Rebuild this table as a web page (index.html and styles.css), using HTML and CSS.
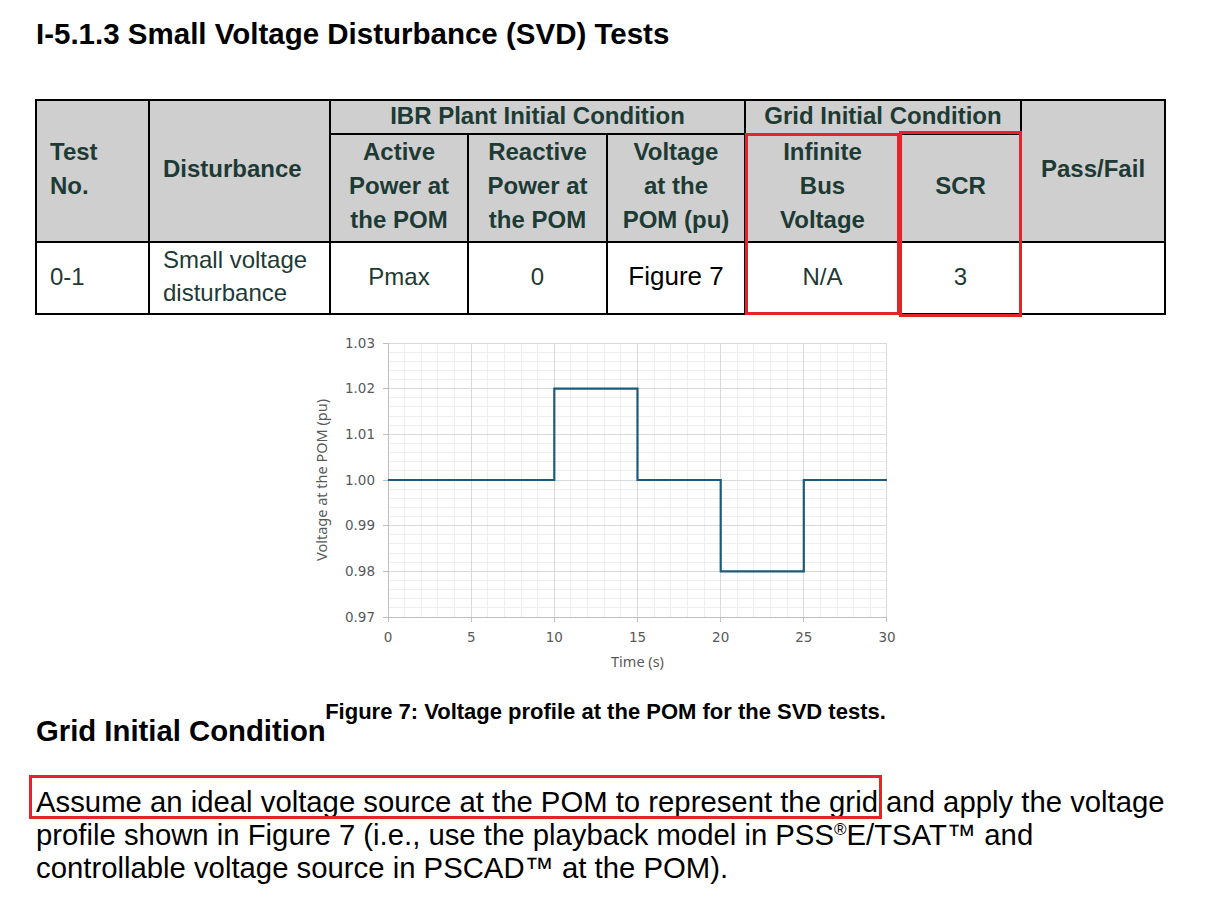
FILE: index.html
```html
<!DOCTYPE html>
<html lang="en">
<head>
<meta charset="utf-8">
<title>I-5.1.3 Small Voltage Disturbance (SVD) Tests</title>
<link rel="stylesheet" href="styles.css">
</head>
<body>
<div class="page">
  <h1 class="title">I-5.1.3 Small Voltage Disturbance (SVD) Tests</h1>

  <div class="table-wrap">
    <table class="tests">
      <colgroup>
        <col class="w113"><col class="w181"><col class="w138"><col class="w139"><col class="w138"><col class="w155"><col class="w121"><col class="w144">
      </colgroup>
      <thead>
        <tr class="hr1">
          <th rowspan="2" class="left">Test<br>No.</th>
          <th rowspan="2" class="left">Disturbance</th>
          <th colspan="3" class="group">IBR Plant Initial Condition</th>
          <th colspan="2" class="group">Grid Initial Condition</th>
          <th rowspan="2">Pass/Fail</th>
        </tr>
        <tr class="hr2">
          <th>Active<br>Power at<br>the POM</th>
          <th>Reactive<br>Power at<br>the POM</th>
          <th>Voltage<br>at the<br>POM (pu)</th>
          <th>Infinite<br>Bus<br>Voltage</th>
          <th>SCR</th>
        </tr>
      </thead>
      <tbody>
        <tr class="br">
          <td class="left">0-1</td>
          <td class="left">Small voltage<br>disturbance</td>
          <td>Pmax</td>
          <td>0</td>
          <td class="fig">Figure 7</td>
          <td>N/A</td>
          <td>3</td>
          <td></td>
        </tr>
      </tbody>
    </table>
    <div class="mark mark-bus"></div>
    <div class="mark mark-scr"></div>
  </div>

  <div class="chart">
    <svg width="600" height="345" viewBox="0 0 600 345" xmlns="http://www.w3.org/2000/svg">
      <path class="grid-minor" d="M104.5 12V286M121.5 12V286M137.5 12V286M154.5 12V286M187.5 12V286M204.5 12V286M221.5 12V286M237.5 12V286M270.5 12V286M287.5 12V286M304.5 12V286M320.5 12V286M354.5 12V286M370.5 12V286M387.5 12V286M404.5 12V286M437.5 12V286M453.5 12V286M470.5 12V286M487.5 12V286M520.5 12V286M537.5 12V286M553.5 12V286M570.5 12V286M88 21.5H587M88 30.5H587M88 39.5H587M88 48.5H587M88 66.5H587M88 75.5H587M88 85.5H587M88 94.5H587M88 112.5H587M88 121.5H587M88 130.5H587M88 139.5H587M88 158.5H587M88 167.5H587M88 176.5H587M88 185.5H587M88 203.5H587M88 212.5H587M88 222.5H587M88 231.5H587M88 249.5H587M88 258.5H587M88 267.5H587M88 276.5H587"/>
      <path class="grid-major" d="M171.5 12V286M254.5 12V286M337.5 12V286M420.5 12V286M503.5 12V286M586.5 12V286M88 12.5H587M88 57.5H587M88 103.5H587M88 149.5H587M88 194.5H587M88 240.5H587"/>
      <path class="axis" d="M88.5 12V291M83 286.5H587M83 12.5H88M83 57.5H88M83 103.5H88M83 149.5H88M83 194.5H88M83 240.5H88M171.5 286V291M254.5 286V291M337.5 286V291M420.5 286V291M503.5 286V291M586.5 286V291"/>
      <path class="series" d="M88 149H254.3V57.7H337.5V149H420.7V240.3H503.8V149H587"/>
      <g class="ylab">
        <text x="75" y="17">1.03</text>
        <text x="75" y="62">1.02</text>
        <text x="75" y="108">1.01</text>
        <text x="75" y="154">1.00</text>
        <text x="75" y="199">0.99</text>
        <text x="75" y="245">0.98</text>
        <text x="75" y="291">0.97</text>
      </g>
      <g class="xlab">
        <text x="88" y="311">0</text>
        <text x="171.2" y="311">5</text>
        <text x="254.3" y="311">10</text>
        <text x="337.5" y="311">15</text>
        <text x="420.7" y="311">20</text>
        <text x="503.8" y="311">25</text>
        <text x="587" y="311">30</text>
      </g>
      <text class="xtitle" x="337.5" y="336">Time (s)</text>
      <text class="ytitle" x="0" y="0" transform="translate(27 149) rotate(-90)">Voltage at the POM (pu)</text>
    </svg>
  </div>

  <p class="caption">Figure 7: Voltage profile at the POM for the SVD tests.</p>

  <h2 class="subhead">Grid Initial Condition</h2>
  <p class="body-text"><span class="hl">Assume an ideal voltage source at the POM to represent the grid</span> and apply the voltage profile shown in Figure 7 (i.e., use the playback model in PSS<sup class="reg">®</sup>E/TSAT™ and controllable voltage source in PSCAD™ at the POM).</p>
</div>
</body>
</html>
```

FILE: styles.css
```css
html, body {
  margin: 0;
  padding: 0;
  background: #ffffff;
}

.page {
  padding: 17px 0 0 36px;
  width: 1160px;
  font-family: "Liberation Sans", Arial, sans-serif;
  color: #000;
}

.title {
  margin: 0;
  font-size: 29.5px;
  line-height: 34px;
  font-weight: bold;
}

.table-wrap {
  position: relative;
  margin-top: 48px;
  margin-left: -1px;
  width: 1131px;
}

.tests {
  border-collapse: collapse;
  table-layout: fixed;
  width: 1131px;
  font-size: 24px;
  color: #1e3a34;
}

.w113 { width: 113px; }
.w181 { width: 181px; }
.w138 { width: 138px; }
.w139 { width: 139px; }
.w155 { width: 155px; }
.w121 { width: 121px; }
.w144 { width: 144px; }

.tests th,
.tests td {
  border: 2px solid #000;
  padding: 0 4px;
  text-align: center;
  vertical-align: middle;
}

.tests th {
  background: #cfcfcf;
  font-weight: bold;
  line-height: 34px;
  padding-bottom: 4px;
}

.tests th.group {
  line-height: 30px;
  padding-bottom: 2px;
}

.tests td {
  background: #fff;
  line-height: 33px;
  padding-bottom: 4px;
}

.tests .left {
  text-align: left;
  padding-left: 13px;
}

.hr1 { height: 34px; }
.hr2 { height: 108px; }
.br { height: 72px; }

.tests td.fig {
  color: #000;
  font-size: 26px;
}

.mark {
  position: absolute;
  border: 3px solid #e3242b;
  box-sizing: border-box;
}

.mark-bus {
  left: 710px;
  top: 34px;
  width: 155px;
  height: 182px;
}

.mark-scr {
  left: 864px;
  top: 32px;
  width: 123px;
  height: 186px;
}

.chart {
  margin-top: 16px;
  margin-left: 264px;
  height: 345px;
}

.chart svg {
  display: block;
}

.grid-minor {
  stroke: #eeeeee;
  stroke-width: 1;
  fill: none;
}

.grid-major {
  stroke: #d9d9d9;
  stroke-width: 1;
  fill: none;
}

.axis {
  stroke: #bfbfbf;
  stroke-width: 1;
  fill: none;
}

.series {
  stroke: #1b5a7a;
  stroke-width: 2.2;
  fill: none;
}

.ylab text {
  font-family: "DejaVu Sans", sans-serif;
  font-size: 13.5px;
  fill: #595959;
  text-anchor: end;
}

.xlab text {
  font-family: "DejaVu Sans", sans-serif;
  font-size: 13.5px;
  fill: #595959;
  text-anchor: middle;
}

.xtitle,
.ytitle {
  font-family: "Noto Sans", sans-serif;
  font-size: 14.5px;
  fill: #595959;
  text-anchor: middle;
}

.caption {
  margin: 28px 0 0 0;
  width: 1131px;
  text-align: center;
  font-size: 22px;
  line-height: 16px;
  font-weight: bold;
  padding-left: 8px;
  box-sizing: border-box;
}

.subhead {
  margin: -2px 0 0 0;
  width: 290px;
  font-size: 29.3px;
  line-height: 26px;
  font-weight: bold;
}

.body-text {
  margin: 41px 0 0 0;
  width: 1140px;
  font-size: 29.3px;
  line-height: 33px;
}

.hl {
  position: relative;
}

.hl::after {
  content: "";
  position: absolute;
  left: -7px;
  right: -4px;
  top: -10px;
  bottom: -1px;
  border: 3px solid #e3242b;
  pointer-events: none;
}

.reg {
  font-size: 17px;
  line-height: 0;
  vertical-align: 10px;
}
```
